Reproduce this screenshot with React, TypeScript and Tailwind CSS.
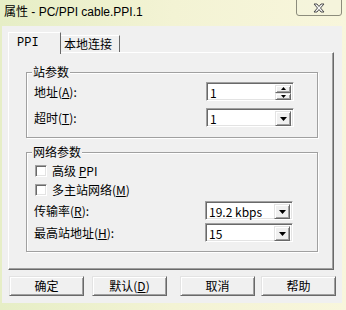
import React from 'react';

const raised =
  'border border-t-[#e3e3e3] border-l-[#e3e3e3] border-r-[#696969] border-b-[#696969] shadow-[inset_1px_1px_0_#ffffff,inset_-1px_-1px_0_#a0a0a0] bg-[#f0f0f0]';
const sunken =
  'border border-t-[#a0a0a0] border-l-[#a0a0a0] border-r-white border-b-white shadow-[inset_1px_1px_0_#696969,inset_-1px_-1px_0_#e3e3e3] bg-white';

function DownArrow() {
  return (
    <svg width="7" height="4" viewBox="0 0 7 4">
      <polygon points="0,0 7,0 3.5,4" fill="#000" />
    </svg>
  );
}

function Combo({ value }: { value: string }) {
  return (
    <div className={`w-[88px] h-[19px] flex p-[2px] ${sunken}`}>
      <span className="flex-1 pl-[1px] text-[12px] leading-[15px] text-black">{value}</span>
      <div className={`w-[16px] h-[15px] flex items-center justify-center ${raised}`}>
        <DownArrow />
      </div>
    </div>
  );
}

function Spin({ value }: { value: string }) {
  return (
    <div className={`w-[88px] h-[19px] flex p-[2px] ${sunken}`}>
      <span className="flex-1 pl-[1px] text-[12px] leading-[15px] text-black">{value}</span>
      <div className="w-[16px] h-[15px] flex flex-col">
        <div className={`flex-1 flex items-center justify-center ${raised}`}>
          <svg width="5" height="3" viewBox="0 0 5 3">
            <polygon points="2.5,0 5,3 0,3" fill="#000" />
          </svg>
        </div>
        <div className={`flex-1 flex items-center justify-center ${raised}`}>
          <svg width="5" height="3" viewBox="0 0 5 3">
            <polygon points="0,0 5,0 2.5,3" fill="#000" />
          </svg>
        </div>
      </div>
    </div>
  );
}

function Group({ title, className, children }: { title: string; className: string; children: React.ReactNode }) {
  return (
    <div
      className={`relative w-[292px] border border-[#a0a0a0] shadow-[1px_1px_0_#ffffff,inset_1px_1px_0_#ffffff] ${className}`}
    >
      <span className="absolute -top-[8px] left-[5px] px-[1px] bg-[#f0f0f0] text-[12px] leading-[14px] text-black">
        {title}
      </span>
      {children}
    </div>
  );
}

function Check({ children }: { children: React.ReactNode }) {
  return (
    <div className="flex items-center h-[12px] pl-[8px] gap-[5px]">
      <div className={`w-[12px] h-[12px] ${sunken}`} />
      <span className="text-[12px] leading-[14px] text-black">{children}</span>
    </div>
  );
}

function Btn({ children, className = '' }: { children: React.ReactNode; className?: string }) {
  return (
    <div
      className={`w-[75px] h-[20px] flex items-center justify-center text-[12px] leading-[14px] text-black ${raised} ${className}`}
    >
      {children}
    </div>
  );
}

export default function App() {
  return (
    <div className="w-[346px] h-[310px] overflow-hidden flex flex-col bg-linear-to-r from-[#e6eec6] via-[#f3f3d4] to-[#f8f6dc] font-['Noto_Sans_CJK_SC',sans-serif]">
      {/* title bar */}
      <div className="h-[26px] flex items-start justify-between">
        <span className="ml-[4px] mt-[5px] text-[12px] leading-[14px] text-black font-['Liberation_Sans','Noto_Sans_CJK_SC',sans-serif]">
          属性 - PC/PPI cable.PPI.1
        </span>
        <div className="mr-[4px] -mt-[2px] w-[46px] h-[18px] rounded-b-[3px] border border-[#8c8c7c] bg-[#f4f3dc]/60 flex items-center justify-center pt-[2px]">
          <svg width="12" height="10" viewBox="0 0 12 10">
            <path
              d="M1 1 L4 1 L6 3.5 L8 1 L11 1 L7.5 5 L11 9 L8 9 L6 6.5 L4 9 L1 9 L4.5 5 Z"
              fill="#f8f8f8"
              stroke="#4a4a4a"
              strokeWidth="1"
            />
          </svg>
        </div>
      </div>

      {/* client */}
      <div className="ml-[2px] w-[340px] h-[277px] bg-[#f0f0f0] pt-[6px] px-[6px] flex flex-col">
        {/* tabs */}
        <div className="h-[20px] flex items-end">
          <div className="relative z-10 w-[53px] h-[22px] -mb-[2px] bg-[#f0f0f0] border-t border-l border-r border-t-white border-l-white border-r-[#696969] pl-[8px] pt-[3px] text-[12px] leading-[14px] text-black font-['Liberation_Mono','Noto_Sans_CJK_SC',monospace]">
            PPI
          </div>
          <div className="w-[59px] h-[17px] bg-[#f0f0f0] border-t border-r border-t-white border-r-[#696969] pl-[3px] pt-[1px] text-[12px] leading-[14px] text-black">
            本地连接
          </div>
        </div>

        {/* panel */}
        <div className="w-[326px] h-[218px] border border-t-white border-l-white border-r-[#696969] border-b-[#696969] shadow-[inset_-1px_-1px_0_#a0a0a0] pl-[17px] pt-[19px]">
          <Group title="站参数" className="h-[66px] pt-[9px] pl-[7px]">
            <div className="flex flex-col gap-[7px]">
              <div className="flex items-center">
                <span className="w-[172px] text-[12px] leading-[14px] text-black">
                  地址(<span className="underline">A</span>):
                </span>
                <Spin value="1" />
              </div>
              <div className="flex items-center">
                <span className="w-[172px] text-[12px] leading-[14px] text-black">
                  超时(<span className="underline">T</span>):
                </span>
                <Combo value="1" />
              </div>
            </div>
          </Group>

          <Group title="网络参数" className="mt-[14px] h-[100px] pt-[12px]">
            <Check>
              高级 <span className="underline">P</span>PI
            </Check>
            <div className="mt-[7px]">
              <Check>
                多主站网络(<span className="underline">M</span>)
              </Check>
            </div>
            <div className="mt-[5px] pl-[7px] flex items-center">
              <span className="w-[171px] text-[12px] leading-[14px] text-black">
                传输率(<span className="underline">R</span>):
              </span>
              <Combo value="19.2 kbps" />
            </div>
            <div className="mt-[3px] pl-[7px] flex items-center">
              <span className="w-[171px] text-[12px] leading-[14px] text-black">
                最高站地址(<span className="underline">H</span>):
              </span>
              <Combo value="15" />
            </div>
          </Group>
        </div>

        {/* buttons */}
        <div className="mt-[6px] ml-[1px] flex">
          <Btn>确定</Btn>
          <Btn className="ml-[8px]">
            默认(<span className="underline">D</span>)
          </Btn>
          <Btn className="ml-[13px]">取消</Btn>
          <Btn className="ml-[6px]">帮助</Btn>
        </div>
      </div>
    </div>
  );
}
